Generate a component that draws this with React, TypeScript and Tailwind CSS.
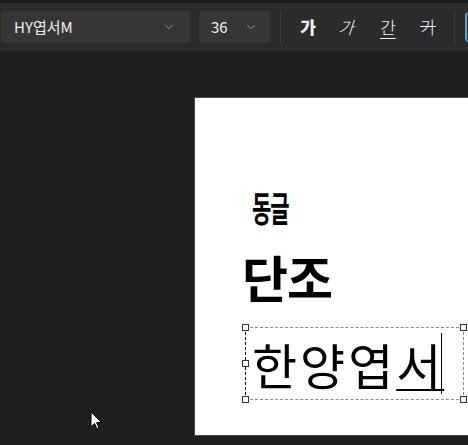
import { ChevronDown } from "lucide-react";

const kr = "font-['Noto_Sans_CJK_KR','Noto_Sans',sans-serif]";

function Handle({ className }: { className: string }) {
  return (
    <span
      className={`absolute w-[7px] h-[7px] bg-white border border-[#333] ${className}`}
    />
  );
}

export default function App() {
  return (
    <div
      className={`relative w-[468px] h-[445px] overflow-hidden bg-[#1f1f1f] ${kr}`}
    >
      {/* top strip */}
      <div className="h-[3px] bg-[#1b1b1b]" />

      {/* toolbar */}
      <div className="h-[48px] bg-[#2b2b2b] flex items-center pl-[1px]">
        <div className="shrink-0 w-[189px] h-[32px] rounded-[4px] bg-[#363636] flex items-center justify-between pl-[13px] pr-[14px]">
          <span className="text-[15px] text-[#f0f0f0]">HY엽서M</span>
          <ChevronDown className="w-[14px] h-[14px] text-[#9a9a9a]" strokeWidth={1.5} />
        </div>
        <div className="shrink-0 ml-[9px] w-[71px] h-[32px] rounded-[4px] bg-[#363636] flex items-center justify-between pl-[12px] pr-[12px]">
          <span className="text-[15px] text-[#f0f0f0]">36</span>
          <ChevronDown className="w-[14px] h-[14px] text-[#9a9a9a]" strokeWidth={1.5} />
        </div>
        <div className="shrink-0 ml-[10px] w-px h-[32px] bg-[#3e3e3e]" />
        <div className="shrink-0 flex items-center text-[#f2f2f2] text-[17px]">
          <span className="w-[40px] ml-[7px] text-center font-black">가</span>
          <span className="w-[40px] text-center font-light inline-block [transform:skewX(-18deg)]">가</span>
          <span className="w-[40px] text-center font-light">
            <span className="underline underline-offset-[4px]">간</span>
          </span>
          <span className="w-[40px] text-center font-light line-through">가</span>
        </div>
        <div className="shrink-0 ml-[6px] w-px h-[32px] bg-[#3e3e3e]" />
        <div className="shrink-0 ml-[10px] w-[10px] h-[30px] rounded-l-[4px] border-l-2 border-[#4aa8d8] bg-[#2f2f2f]" />
      </div>

      {/* canvas */}
      <div className="pl-[194px] pt-[46px]">
        <div className="relative w-[276px] h-[339px] bg-white border border-[#4a4a4a]">
          <div className="flex flex-col items-start text-black">
            <div className="ml-[57px] mt-[88px] h-[40px]">
              <span className="block text-[21px] leading-[24px] font-bold origin-top-left scale-y-[1.7] tracking-[-1px]">
                동글
              </span>
            </div>
            <span className="ml-[47px] mt-[22px] text-[50px] leading-[56px] font-bold tracking-[-1px]">
              단조
            </span>
          </div>

          {/* selected text box */}
          <div className="absolute left-[50px] top-[229px] w-[219px] h-[73px] border border-dashed border-[#8a8a8a] border-l-black">
            <div className="flex items-center h-full pl-[6px]">
              <span className="text-[49px] leading-none font-normal tracking-[3px]">
                한양엽<span className="underline decoration-2 underline-offset-[4px]">서</span>
              </span>
              <span className="ml-[-3px] w-px h-[61px] bg-black" />
            </div>
            <Handle className="-left-[4px] -top-[4px]" />
            <Handle className="-right-[4px] -top-[4px]" />
            <Handle className="-left-[4px] top-[32px]" />
            <Handle className="-left-[4px] -bottom-[4px]" />
            <Handle className="-right-[4px] -bottom-[4px]" />
          </div>
        </div>
      </div>

      {/* mouse pointer */}
      <svg
        className="absolute left-[90px] top-[411px]"
        width="13"
        height="20"
        viewBox="0 0 13 20"
      >
        <path
          d="M1 1 L1 16 L4.5 12.5 L7 18 L9 17 L6.6 11.6 L11.5 11.5 Z"
          fill="white"
          stroke="black"
          strokeWidth="1"
          strokeLinejoin="round"
        />
      </svg>
    </div>
  );
}
